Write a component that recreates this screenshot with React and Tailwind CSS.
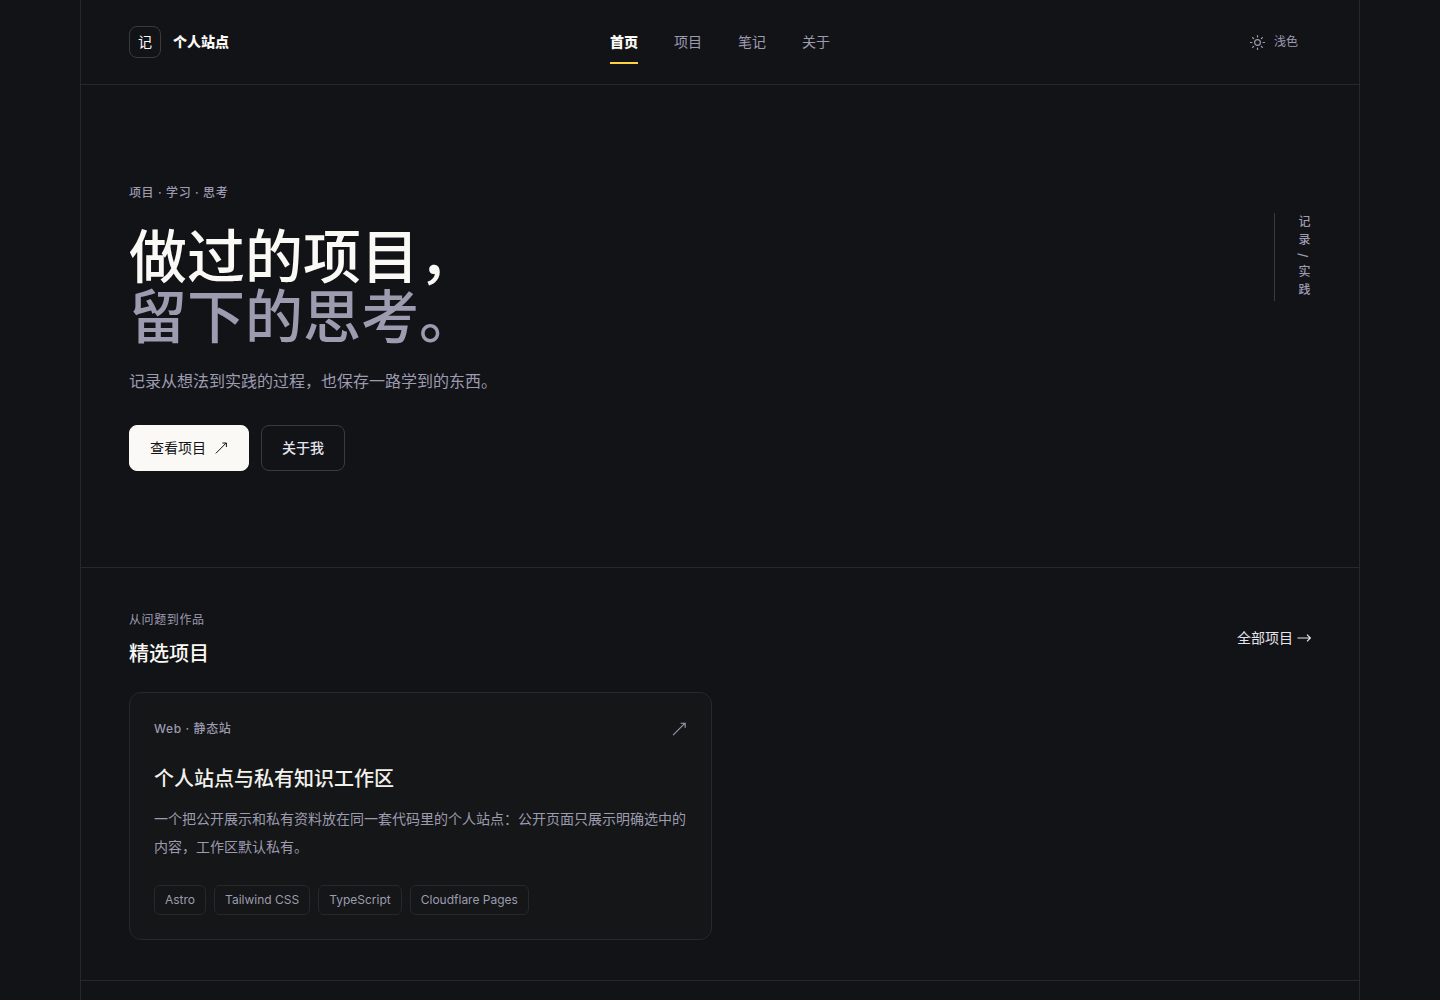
import React from 'react';

const navItems = [
  { label: '首页', href: '#home', active: true },
  { label: '项目', href: '#projects' },
  { label: '笔记', href: '#notes' },
  { label: '关于', href: '#about' },
];

const tags = ['Astro', 'Tailwind CSS', 'TypeScript', 'Cloudflare Pages'];

const SunIcon = () => (
  <svg className="size-4" viewBox="0 0 16 16" fill="none" stroke="currentColor" strokeWidth="1.2" strokeLinecap="round" aria-hidden="true">
    <circle cx="7.5" cy="8.5" r="2.9" />
    <path d="M7.5 1.5v1.4M7.5 14.1v1.4M.5 8.5h1.4M13.1 8.5h1.4M2.6 3.6l.9.9M11.5 12.5l.9.9M2.6 13.4l.9-.9M11.5 4.5l.9-.9" />
  </svg>
);

const DiagonalArrow = ({ className }) => (
  <svg className={className} viewBox="0 0 14 14" fill="none" stroke="currentColor" aria-hidden="true">
    <path d="M1.8 12.4L12.3 1.9M8.4 2h4v4" />
  </svg>
);

const Header = () => (
  <header className="grid h-[85px] grid-cols-[1fr_auto_1fr] items-center border-b border-[#27282c] px-12">
    <a href="#home" className="flex items-center gap-3 text-[#faf9f5]">
      <span className="flex size-8 items-center justify-center rounded-lg border border-[#3a3a40] text-sm">记</span>
      <span className="text-sm font-extrabold">个人站点</span>
    </a>
    <nav className="flex gap-9">
      {navItems.map((item) => (
        <a
          key={item.label}
          href={item.href}
          className={
            item.active
              ? 'flex h-11 items-center border-b-2 border-[#ffd23f] pt-0.5 text-sm font-extrabold text-[#faf9f5]'
              : 'flex h-11 items-center border-b-2 border-transparent pt-0.5 text-sm text-[#9c9bb0]'
          }
        >
          {item.label}
        </a>
      ))}
    </nav>
    <button type="button" className="flex items-center gap-2 justify-self-end border border-transparent px-3 py-2 text-xs text-[#9c9bb0]">
      <SunIcon />
      浅色
    </button>
  </header>
);

const Hero = () => (
  <section className="flex items-start justify-between border-b border-[#27282c] px-12 pt-[98px] pb-24">
    <div>
      <p className="text-xs leading-5 font-medium tracking-wider text-[#9c9bb0]">项目 · 学习 · 思考</p>
      <h1 className="mt-6 text-[58px] leading-[60px] font-medium text-[#faf9f5]">
        做过的项目，
        <span className="block text-[#9c9bb0]">留下的思考。</span>
      </h1>
      <p className="mt-5 text-base leading-7 text-[#9c9bb0]">记录从想法到实践的过程，也保存一路学到的东西。</p>
      <div className="mt-[30px] flex gap-3">
        <a
          href="#projects"
          className="flex h-[46px] items-center gap-2 rounded-lg border border-[#faf9f5] bg-[#faf9f5] px-5 text-sm text-[#121317]"
        >
          查看项目
          <DiagonalArrow className="size-3.5" />
        </a>
        <a href="#about" className="flex h-[46px] items-center rounded-lg border border-[#3a3a40] px-5 text-sm font-medium text-[#e5e4ee]">
          关于我
        </a>
      </div>
    </div>
    <p className="mt-[30px] flex gap-0.5 border-l border-[#3a3a40] pt-0.5 pl-5 text-xs leading-4 font-medium tracking-[6px] text-[#9c9bb0] [writing-mode:vertical-rl]">
      <span>记录</span>
      <span className="[text-orientation:sideways]">/</span>
      <span>实践</span>
    </p>
  </section>
);

const ProjectCard = () => (
  <article className="rounded-xl border border-[#27282c] bg-[#151617] p-6">
    <div className="flex items-center justify-between text-[#9c9bb0]">
      <p className="text-xs leading-6 font-medium tracking-wider">Web · 静态站</p>
      <DiagonalArrow className="size-4" />
    </div>
    <h3 className="mt-6 text-xl leading-7 font-medium text-[#f2f1ec]">个人站点与私有知识工作区</h3>
    <p className="mt-3 text-sm leading-7 text-[#9c9bb0]">
      一个把公开展示和私有资料放在同一套代码里的个人站点：公开页面只展示明确选中的内容，工作区默认私有。
    </p>
    <ul className="mt-6 flex flex-wrap gap-2">
      {tags.map((tag) => (
        <li key={tag} className="rounded-md border border-[#27282c] px-2.5 py-1 text-xs leading-5 text-[#9c9bb0]">
          {tag}
        </li>
      ))}
    </ul>
  </article>
);

const Projects = () => (
  <section className="border-b border-[#27282c] px-12 py-10">
    <div className="flex items-center justify-between">
      <div>
        <p className="text-xs leading-6 tracking-wider text-[#9c9bb0]">从问题到作品</p>
        <h2 className="mt-2 text-xl leading-7 font-medium text-[#faf9f5]">精选项目</h2>
      </div>
      <a href="#projects" className="flex items-center gap-1 text-sm text-[#e5e4ee]">
        全部项目
        <svg className="size-3.5" viewBox="0 0 14 14" fill="none" stroke="currentColor" strokeWidth="1.2" aria-hidden="true">
          <path d="M.5 7h13M10 3.6L13.4 7 10 10.4" />
        </svg>
      </a>
    </div>
    <div className="mt-6 grid grid-cols-1 gap-4 md:grid-cols-2">
      <ProjectCard />
    </div>
  </section>
);

const App = () => {
  return (
    <div lang="zh-CN" className="min-h-screen bg-[#121317] font-['Inter','Noto_Sans_CJK_SC',sans-serif]">
      <div className="mx-auto min-h-screen max-w-[1280px] border-x border-[#27282c]">
        <Header />
        <main>
          <Hero />
          <Projects />
        </main>
      </div>
    </div>
  );
};

export default App;
